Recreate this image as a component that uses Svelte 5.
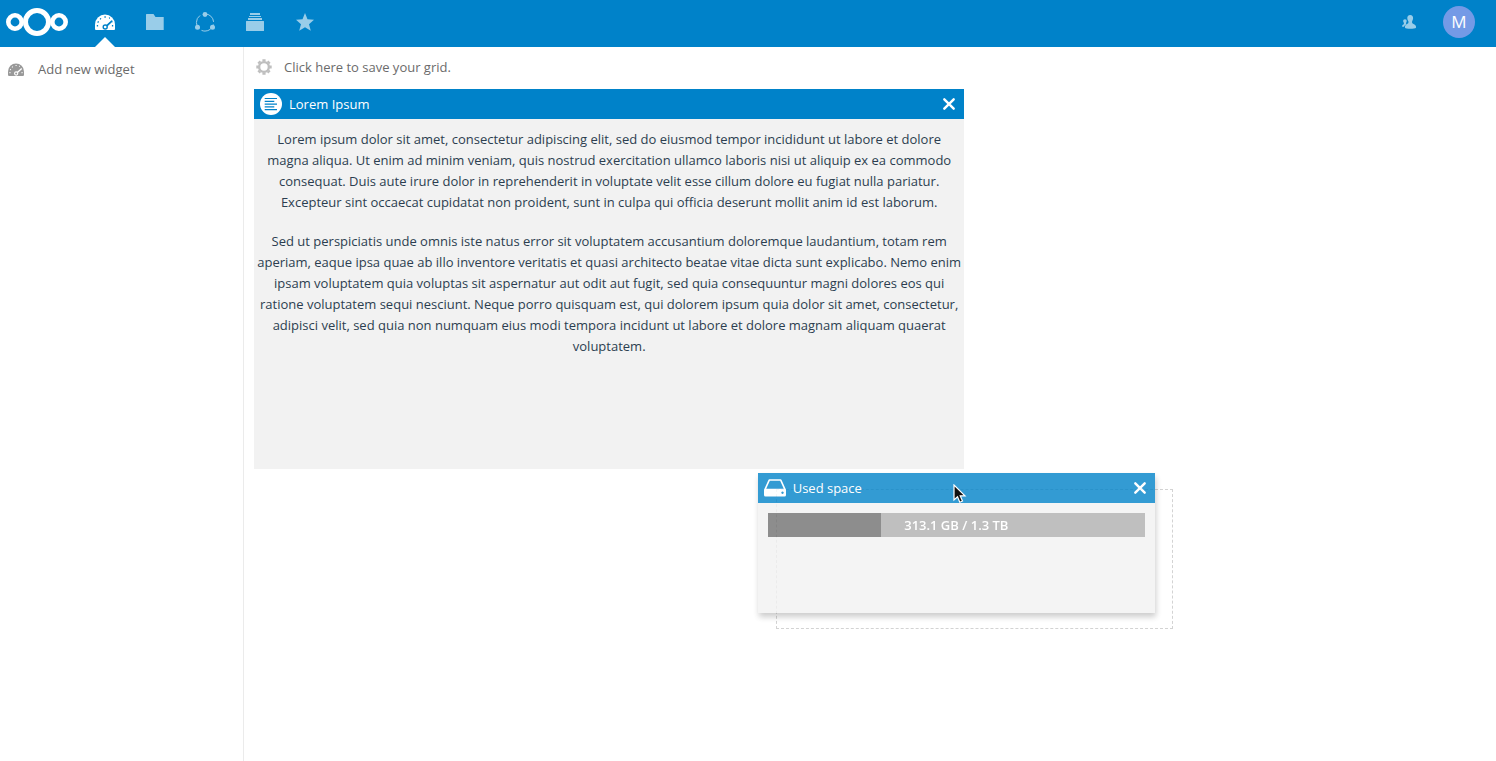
<script>
  const used = 30;
  let gridItems = $state({ text: true, space: true });
</script>

{#snippet gauge(hole)}
  <path d="M1 16Q0 16 0 15v-4.500a10 10 0 0 1 20 0V15q0 1-1 1Z" />
  <path
    d="M9.400 3h1.400M5 4.500l1 .7M2.600 7.800l1.100.5M1.800 11.800h1.300M14 4.100l.9-.2M16.900 11.800h1.300M17 8.300h.2"
    fill="none"
    stroke={hole}
    stroke-width="1.500"
  />
  <path d="m11 12.500 5.800-5.300" fill="none" stroke={hole} stroke-width="1.700" stroke-linecap="round" />
  <circle cx="10.200" cy="13" r="2" fill="currentColor" stroke={hole} stroke-width="1.400" />
{/snippet}

{#snippet cross()}
  <svg width="14" height="14" viewBox="0 0 14 14" aria-hidden="true">
    <path d="m2.300 2.300 9.400 9.400M11.700 2.300l-9.400 9.400" fill="none" stroke="#fff" stroke-width="2.400" stroke-linecap="round" />
  </svg>
{/snippet}

<div class="page">
  <header>
    <a class="logo" href="#home" aria-label="Home">
      <svg width="62" height="30" viewBox="0 0 62 30" fill="none" stroke="#fff">
        <circle cx="31" cy="15" r="11.500" stroke-width="5" />
        <circle cx="9" cy="15" r="6.700" stroke-width="4.600" />
        <circle cx="53" cy="15" r="6.700" stroke-width="4.600" />
      </svg>
    </a>
    <nav aria-label="Apps">
      <a class="active" href="#dashboard" aria-label="Dashboard">
        <svg width="20" height="16" viewBox="0 0 20 16" fill="currentColor">{@render gauge("#0082c9")}</svg>
      </a>
      <a href="#files" aria-label="Files">
        <svg width="20" height="20" viewBox="0 0 20 20" fill="currentColor"><path d="M1.500 2h7l2 3h8.200v13H1V2.500Z" /></svg>
      </a>
      <a href="#circles" aria-label="Circles">
        <svg width="20" height="20" viewBox="0 0 20 20" fill="currentColor">
          <circle cx="10" cy="10.500" r="8.600" fill="none" stroke="currentColor" stroke-width="1" stroke-dasharray="15 3.010" stroke-dashoffset="-2" />
          <circle cx="10" cy="2.500" r="2.400" /><circle cx="2.500" cy="15.200" r="2.500" /><circle cx="17.500" cy="15.200" r="2.500" />
        </svg>
      </a>
      <a href="#deck" aria-label="Deck">
        <svg width="20" height="20" viewBox="0 0 20 20" fill="currentColor">
          <path d="M5 1h10v2H5zM4 4h12v1H4zM3 6h14v2H3zM1 9.500q0-.5.500-.5h17q.5 0 .5.500v9q0 .5-.5.500h-17q-.5 0-.5-.5z" />
        </svg>
      </a>
      <a href="#favorites" aria-label="Favorites">
        <svg width="20" height="20" viewBox="0 0 20 20" fill="currentColor"><path d="m10 1 2.500 6.200 6.500.5-5 4.500 1.800 6.600L10 15.200l-5.800 3.600L6 12.200 1 7.700l6.500-.5z" /></svg>
      </a>
    </nav>
    <div class="user">
      <button class="contacts" aria-label="Contacts">
        <svg width="16" height="16" viewBox="0 0 16 16" fill="currentColor">
          <path d="M9.200 1c2 0 3 1.300 2.900 3.200-.1 1.500-.6 2.300-1 3v1.700c.4.900 3.700 1.300 3.900 3.600v1.200C14 15 4.500 15 4 13.700v-1.200c.2-2.300 3-2.700 3.400-3.600V7.200c-.5-.7-1-1.500-1.100-3C6.200 2.300 7.200 1 9.200 1Z" />
          <path d="M4 5.200c1.200 0 1.800.9 1.700 2-.1.900-.4 1.200-.6 1.600v1.100l.6.400c-1.500.6-2.400 1.300-2.600 2.500-1.400-.1-2-.3-2.100-.6.100-1.500 1.600-1.700 1.900-2.300V8.800c-.3-.4-.6-.7-.7-1.600-.1-1.100.5-2 1.800-2Z" />
        </svg>
      </button>
      <button class="avatar" aria-label="Account M">M</button>
    </div>
  </header>

  <div class="content">
    <aside>
      <button class="add">
        <svg width="16" height="13" viewBox="0 0 20 16" fill="currentColor">{@render gauge("#fff")}</svg>
        Add new widget
      </button>
    </aside>
    <main>
      <button class="save">
        <svg width="16" height="16" viewBox="0 0 16 16" fill="none" stroke="currentColor">
          <circle cx="8" cy="8" r="4.900" stroke-width="2.400" />
          <g stroke-width="3.200">
            <path d="M8 .3v2.200M8 13.500v2.200M.3 8h2.200M13.500 8h2.200M2.550 2.550l1.500 1.500M11.950 11.950l1.500 1.500M13.450 2.550l-1.500 1.500M4.050 11.950l-1.500 1.500" />
          </g>
        </svg>
        Click here to save your grid.
      </button>
      <div class="grid">
        {#if gridItems.text}
          <section class="widget lorem">
            <div class="bar">
              <svg width="22" height="22" viewBox="0 0 22 22" aria-hidden="true">
                <circle cx="11" cy="11" r="11" fill="#fff" />
                <path d="M4.700 5.500H17M4.700 8.300h9.600M4.700 11.100H17M4.700 13.900h9.600M4.700 16.700H17" stroke="#0082c9" stroke-width="1.200" />
              </svg>
              <h2>Lorem Ipsum</h2>
              <button aria-label="Close Lorem Ipsum" onclick={() => (gridItems.text = false)}>{@render cross()}</button>
            </div>
            <div class="text">
              <p>Lorem ipsum dolor sit amet, consectetur adipiscing elit, sed do eiusmod tempor incididunt ut labore et dolore magna aliqua. Ut enim ad minim veniam, quis nostrud exercitation ullamco laboris nisi ut aliquip ex ea commodo consequat. Duis aute irure dolor in reprehenderit in voluptate velit esse cillum dolore eu fugiat nulla pariatur. Excepteur sint occaecat cupidatat non proident, sunt in culpa qui officia deserunt mollit anim id est laborum.</p>
              <p>Sed ut perspiciatis unde omnis iste natus error sit voluptatem accusantium doloremque laudantium, totam rem aperiam, eaque ipsa quae ab illo inventore veritatis et quasi architecto beatae vitae dicta sunt explicabo. Nemo enim ipsam voluptatem quia voluptas sit aspernatur aut odit aut fugit, sed quia consequuntur magni dolores eos qui ratione voluptatem sequi nesciunt. Neque porro quisquam est, qui dolorem ipsum quia dolor sit amet, consectetur, adipisci velit, sed quia non numquam eius modi tempora incidunt ut labore et dolore magnam aliquam quaerat voluptatem.</p>
            </div>
          </section>
        {/if}
        {#if gridItems.space}
          <div class="placeholder"></div>
          <section class="widget space">
            <div class="bar">
              <svg width="22" height="22" viewBox="0 0 22 22" aria-hidden="true">
                <path d="M5.300 3h11.400L21 12.500H1z" fill="none" stroke="#fff" stroke-width="1.700" stroke-linejoin="round" />
                <path fill="#fff" fill-rule="evenodd" d="M0 12.500h22v5.500q0 1.500-1.500 1.500h-19Q0 19.500 0 18zM18.500 14.500a1.200 1.200 0 1 0 .01 0z" />
              </svg>
              <h2>Used space</h2>
              <button aria-label="Close Used space" onclick={() => (gridItems.space = false)}>{@render cross()}</button>
            </div>
            <div class="usage">
              <div class="fill" style="width: {used}%"></div>
              <span>313.1 GB / 1.3 TB</span>
            </div>
          </section>
          <svg class="cursor" width="14" height="20" viewBox="0 0 14 20" aria-hidden="true">
            <path d="M1 1v15l3.500-3.200 2.300 5.400 2.700-1.200-2.300-5.200H12z" fill="#111" stroke="#fff" stroke-width="1.200" />
          </svg>
        {/if}
      </div>
    </main>
  </div>
</div>

<style>
  :global(body) {
    margin: 0;
  }
  .page {
    min-height: 100vh;
    display: flex;
    flex-direction: column;
    overflow: hidden;
    background: #fff;
    font-family: "Open Sans", sans-serif;
    font-size: 13px;
    line-height: 20px;
    color: #2c3e50;
  }
  button {
    border: 0;
    padding: 0;
    background: none;
    font: inherit;
    color: inherit;
    cursor: pointer;
  }
  svg {
    display: block;
    flex: none;
  }
  header {
    height: 47px;
    display: flex;
    background: #0082c9;
    color: #fff;
  }
  .logo {
    padding: 7px 12px 0 6px;
  }
  nav {
    display: flex;
  }
  nav a {
    position: relative;
    width: 50px;
    height: 44px;
    display: grid;
    place-items: center;
    color: #99cde9;
  }
  nav a.active {
    color: #fff;
  }
  nav a.active::after {
    content: "";
    position: absolute;
    left: 15px;
    bottom: -3px;
    border: 10px solid transparent;
    border-top: 0;
    border-bottom-color: #fff;
  }
  .user {
    height: 44px;
    margin-left: auto;
    padding-right: 21px;
    display: flex;
    align-items: center;
    gap: 26px;
  }
  .contacts {
    color: #99cde9;
  }
  .avatar {
    width: 32px;
    height: 32px;
    border-radius: 50%;
    background: #749ae6;
    color: #fff;
    font-size: 17px;
    font-weight: 500;
  }
  .content {
    flex: 1;
    display: flex;
  }
  aside {
    width: 243px;
    flex: none;
    border-right: 1px solid #ebebeb;
  }
  .add,
  .save {
    display: flex;
    align-items: center;
    color: #6b6b6b;
  }
  .add {
    padding: 12px 8px;
    gap: 14px;
  }
  .add svg {
    color: #999;
  }
  .save {
    padding: 10px 12px;
    gap: 12px;
  }
  .save svg {
    color: #bfbfbf;
  }
  main {
    flex: 1;
    min-width: 0;
  }
  .grid {
    position: relative;
    height: 560px;
  }
  .widget,
  .placeholder {
    position: absolute;
    box-sizing: border-box;
  }
  .widget {
    background: #f2f2f2;
  }
  .lorem {
    top: 2px;
    left: 10px;
    width: calc(100% * 7 / 12 - 20px);
    height: 380px;
  }
  .placeholder {
    top: 402px;
    left: calc(100% * 5 / 12 + 10px);
    width: calc(100% / 3 - 20px);
    height: 140px;
    border: 1px dashed #d3d3d3;
  }
  .space {
    top: 386px;
    left: calc(100% * 5 / 12 - 8px);
    width: calc(100% / 3 - 20px);
    height: 140px;
    opacity: 0.8;
    box-shadow: 1px 4px 6px rgba(0, 0, 0, 0.25);
  }
  .bar {
    height: 30px;
    padding: 0 8px 0 6px;
    display: flex;
    align-items: center;
    gap: 7px;
    background: #0082c9;
    color: #fff;
  }
  h2 {
    flex: 1;
    margin: 0;
    font-size: 13px;
    font-weight: 400;
  }
  .text {
    padding: 10px 3px;
    line-height: 21px;
    text-align: center;
  }
  p {
    margin: 0 0 18px;
  }
  .usage {
    height: 24px;
    margin: 10px;
    display: grid;
    align-items: center;
    background: #b0b0b0;
    color: #fff;
    font-weight: 600;
    text-align: center;
  }
  .usage > * {
    grid-area: 1 / 1;
  }
  .fill {
    height: 24px;
    background: #717171;
  }
  .cursor {
    position: absolute;
    top: 397px;
    left: calc(100% * 5 / 12 + 187px);
  }
</style>
